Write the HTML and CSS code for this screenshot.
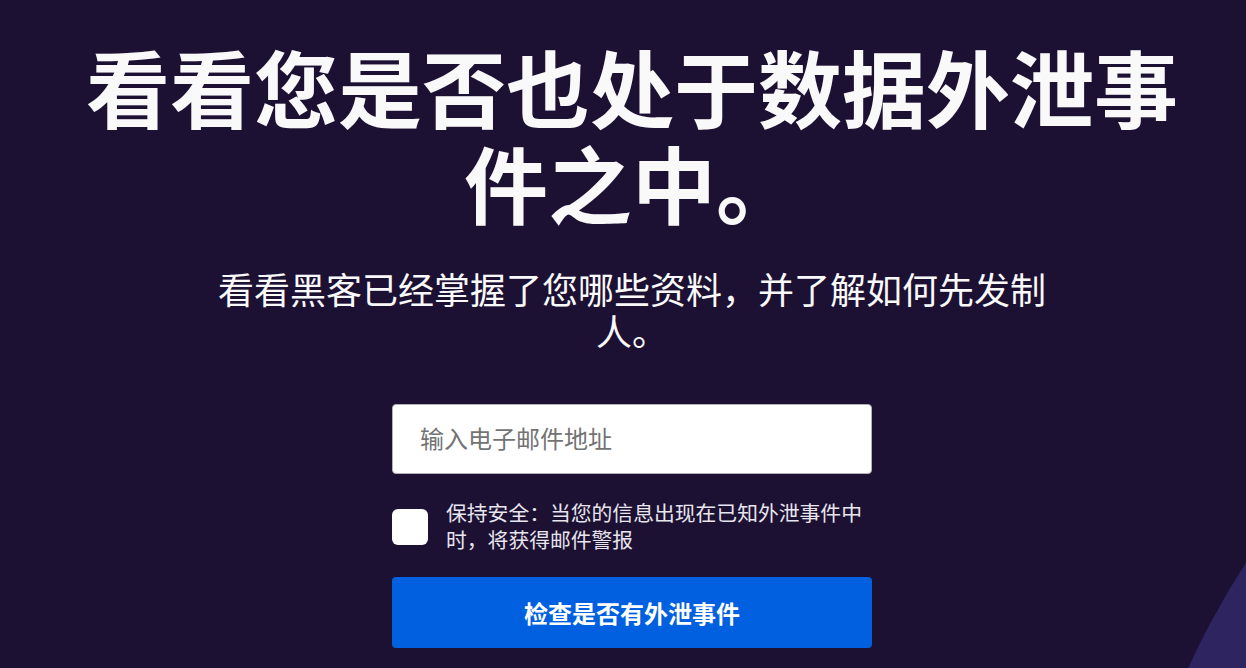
FILE: index.html
```html
<!DOCTYPE html>
<html lang="zh-CN">
<head>
<meta charset="utf-8">
<title>Monitor</title>
<link rel="stylesheet" href="styles.css">
</head>
<body>
<div class="page">
  <svg class="blob" viewBox="0 0 1246 668" preserveAspectRatio="none" aria-hidden="true">
    <circle cx="1916" cy="1000" r="800" fill="#2e2560"/>
  </svg>
  <main class="hero">
    <h1 class="title">看看您是否也处于数据外泄事件之中。</h1>
    <p class="lead">看看黑客已经掌握了您哪些资料，并了解如何先发制人。</p>
    <form class="scan-form">
      <input class="email" type="email" placeholder="输入电子邮件地址">
      <label class="opt">
        <span class="box"></span>
        <span class="opt-text">保持安全：当您的信息出现在已知外泄事件中时，将获得邮件警报</span>
      </label>
      <button class="cta" type="button">检查是否有外泄事件</button>
    </form>
  </main>
</div>
</body>
</html>
```

FILE: styles.css
```css
html, body {
  margin: 0;
  padding: 0;
  height: 100%;
  overflow: hidden;
}
body {
  background: #1d1133;
  font-family: "Inter", "Noto Sans CJK SC", sans-serif;
  color: #f9f9fa;
}
.page {
  position: relative;
  height: 668px;
  overflow: hidden;
}
.blob {
  position: absolute;
  left: 0;
  top: 0;
  width: 1246px;
  height: 668px;
}
.hero {
  position: relative;
  display: flex;
  flex-direction: column;
  align-items: center;
  padding: 44px 0 0 18px;
}
.title {
  margin: 0;
  max-width: 1120px;
  font-size: 84px;
  line-height: 96px;
  font-weight: 700;
  text-align: center;
  letter-spacing: 0;
}
.lead {
  margin: 34px 0 0;
  max-width: 840px;
  font-size: 36px;
  line-height: 42px;
  font-weight: 400;
  text-align: center;
}
.scan-form {
  margin-top: 50px;
  width: 480px;
  display: flex;
  flex-direction: column;
}
.email {
  box-sizing: border-box;
  width: 480px;
  height: 70px;
  border: 1px solid #b1b1b3;
  border-radius: 4px;
  background: #fff;
  padding: 0 27px;
  font-family: inherit;
  font-size: 24px;
  color: #0c0c0d;
  outline: none;
}
.email::placeholder {
  color: #737373;
}
.opt {
  margin-top: 26px;
  display: flex;
  align-items: center;
  gap: 18px;
}
.box {
  flex: 0 0 36px;
  width: 36px;
  height: 36px;
  background: #fff;
  border-radius: 6px;
}
.opt-text {
  font-size: 20.8px;
  line-height: 27px;
  color: #e7e5ee;
}
.cta {
  margin-top: 23px;
  height: 71px;
  border: 0;
  border-radius: 4px;
  background: #0060df;
  color: #fff;
  font-family: inherit;
  font-size: 24px;
  font-weight: 700;
}
```
